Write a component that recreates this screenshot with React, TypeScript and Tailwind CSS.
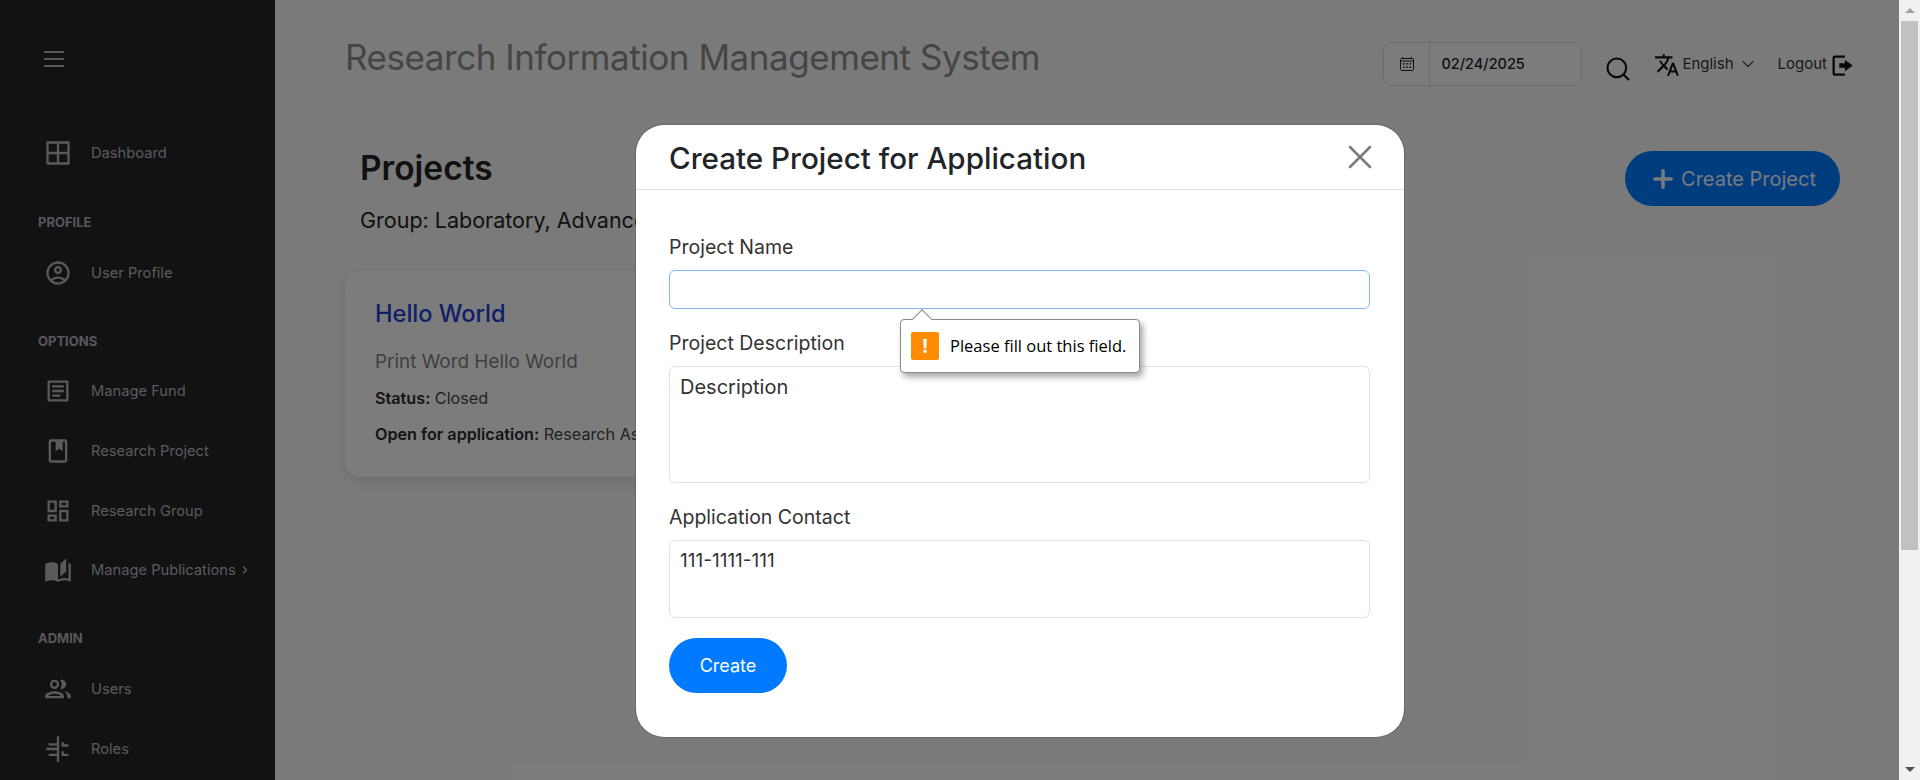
import React from "react";
import { X, Plus, ChevronDown, ChevronRight, Search } from "lucide-react";

const sans = "font-['Inter','Noto_Sans',sans-serif]";

function Ico({ d, cls = "" }: { d: string; cls?: string }) {
  return (
    <svg viewBox="0 0 24 24" className={"w-7 h-7 fill-current shrink-0 " + cls}>
      <path d={d} fillRule="evenodd" />
    </svg>
  );
}

const icons = {
  dash: "M3 2h18a1 1 0 0 1 1 1v18a1 1 0 0 1-1 1H3a1 1 0 0 1-1-1V3a1 1 0 0 1 1-1zm1 2v7h7V4H4zm9 0v7h7V4h-7zM4 13v7h7v-7H4zm9 0v7h7v-7h-7z",
  user: "M12 2C6.48 2 2 6.48 2 12s4.48 10 10 10 10-4.48 10-10S17.52 2 12 2zM7.35 18.5C8.66 17.56 10.26 17 12 17s3.34.56 4.65 1.5C15.34 19.44 13.74 20 12 20s-3.34-.56-4.65-1.5zm10.79-1.38C16.45 15.8 14.32 15 12 15s-4.45.8-6.14 2.12C4.7 15.73 4 13.95 4 12c0-4.42 3.58-8 8-8s8 3.58 8 8c0 1.95-.7 3.73-1.86 5.12zM12 6c-1.93 0-3.5 1.57-3.5 3.5S10.07 13 12 13s3.5-1.57 3.5-3.5S13.93 6 12 6zm0 5c-.83 0-1.5-.67-1.5-1.5S11.17 8 12 8s1.500.67 1.500 1.500S12.830 11 12 11z",
  fund: "M4 3h16a1 1 0 0 1 1 1v16a1 1 0 0 1-1 1H4a1 1 0 0 1-1-1V4a1 1 0 0 1 1-1zm1 2v14h14V5H5zm2 2h10v2H7V7zm0 4h10v2H7v-2zm0 4h7v2H7v-2z",
  book: "M6 2h12a2 2 0 0 1 2 2v16a2 2 0 0 1-2 2H6a2 2 0 0 1-2-2V4a2 2 0 0 1 2-2zm0 2v16h12V4h-2v8l-3-2-3 2V4H6z",
  group: "M19 5v2h-4V5h4M9 5v6H5V5h4m10 8v6h-4v-6h4M9 17v2H5v-2h4M21 3h-8v6h8V3zM11 3H3v10h8V3zm10 8h-8v10h8V11zm-10 4H3v6h8v-6z",
  pub: "M19 1l-5 5v11l5-4.500V1zM1 6v14.650c0 .250.250.500.500.500.100 0 .150-.050.250-.050C3.100 20.450 5.050 20 6.500 20c1.950 0 4.050.400 5.500 1.500V6c-1.450-1.100-3.550-1.500-5.500-1.500S2.450 4.900 1 6zm22 13.500V6c-.600-.450-1.250-.750-2-1v13.500c-1.100-.350-2.300-.500-3.500-.500-1.700 0-4.150.650-5.500 1.500v2c1.350-.850 3.800-1.500 5.500-1.500 1.650 0 3.350.300 4.750 1.050.100.050.150.050.250.050.250 0 .500-.250.500-.500v-1.100z",
  users: "M9 12a4 4 0 1 0 0-8 4 4 0 0 0 0 8zm0-6a2 2 0 1 1 0 4 2 2 0 0 1 0-4zm6.100 6A4 4 0 0 0 15 4c-.5 0-.9.100-1.300.2a6 6 0 0 1 0 7.600c.4.100.8.200 1.400.200zM9 14c-2.700 0-8 1.300-8 4v2h16v-2c0-2.700-5.300-4-8-4zm0 2c2.400 0 4.800.9 5.600 2H3.400c.8-1.100 3.200-2 5.600-2zm8-2c1.500 1.100 3 2.300 3 4v2h3v-2c0-2.300-3.500-3.600-6-4z",
  roles: "M11 1h2v22h-2v-5H4v-2h7v-3H2v-2h9V9H4V7h7V1zm4 5h2v2h4v2h-6V6zm0 8h2v2h4v2h-6v-4z",
  translate: "M12.87 15.07l-2.54-2.51.03-.03c1.74-1.94 2.98-4.17 3.71-6.53H17V4h-7V2H8v2H1v1.990h11.170C11.500 7.920 10.440 9.750 9 11.350 8.070 10.320 7.300 9.190 6.690 8h-2c.730 1.630 1.730 3.170 2.980 4.560l-5.090 5.020L4 19l5-5 3.110 3.110.760-2.040zM18.500 10h-2L12 22h2l1.120-3h4.750L21 22h2l-4.500-12zm-2.620 7l1.620-4.330L19.120 17h-3.240z",
  logout: "M4 5a2 2 0 0 1 2-2h9v2H6v14h9v2H6a2 2 0 0 1-2-2V5zm11 2l7 5-7 5v-3H10v-4h5V7z",
};

function NavItem({ icon, label, chevron }: { icon: string; label: string; chevron?: boolean }) {
  return (
    <div className="h-[60px] flex items-center pl-[44px] gap-[19px] text-[#b4b4b8]">
      <Ico d={icon} cls="text-[#b4b4b8]" />
      <span className={"text-[14.7px] leading-none whitespace-nowrap " + (chevron ? "-mt-[2px]" : "")}>{label}</span>
      {chevron && <ChevronRight className="w-3 h-3 -ml-[16px] -mt-[2px] text-[#c0c0c4]" strokeWidth={2.5} />}
    </div>
  );
}

function Section({ children }: { children: string }) {
  return <div className="pl-[38px] h-5 flex items-center text-[13px] font-bold text-[#b0b0b4] leading-none">{children}</div>;
}

function CalendarDots() {
  return (
    <svg viewBox="0 0 16 16" className="w-4 h-4 text-[#222]">
      <rect x="1.500" y="2.500" width="13" height="12" rx="1" fill="none" stroke="currentColor" strokeWidth="1" />
      <path d="M4 1v2M12 1v2M1.500 5h13" stroke="currentColor" strokeWidth="1" fill="none" />
      <path d="M4 7h1.500v1.500H4zM7.250 7h1.500v1.500h-1.500zM10.500 7H12v1.500h-1.500zM4 10.500h1.500V12H4zM7.250 10.500h1.500V12h-1.500zM10.500 10.500H12V12h-1.500z" fill="currentColor" />
    </svg>
  );
}

export default function App() {
  return (
    <div className={"relative h-[780px] w-full overflow-hidden flex bg-[#f5f5f5] " + sans}>
      <aside className="w-[275px] shrink-0 bg-[#242428] flex flex-col">
        <div className="pl-[44px] pt-[51px] h-[123px]">
          <div className="w-5 flex flex-col gap-[5px]">
            <div className="h-[2px] bg-[#b0b0b0]" />
            <div className="h-[2px] bg-[#b0b0b0]" />
            <div className="h-[2px] bg-[#b0b0b0]" />
          </div>
        </div>
        <NavItem icon={icons.dash} label="Dashboard" />
        <div className="h-[29px]" />
        <Section>PROFILE</Section>
        <div className="h-[11px]" />
        <NavItem icon={icons.user} label="User Profile" />
        <div className="h-[28px]" />
        <Section>OPTIONS</Section>
        <div className="h-[10px]" />
        <NavItem icon={icons.fund} label="Manage Fund" />
        <NavItem icon={icons.book} label="Research Project" />
        <NavItem icon={icons.group} label="Research Group" />
        <NavItem icon={icons.pub} label="Manage Publications" chevron />
        <div className="h-[27px]" />
        <Section>ADMIN</Section>
        <div className="h-[11px]" />
        <NavItem icon={icons.users} label="Users" />
        <NavItem icon={icons.roles} label="Roles" />
      </aside>

      <main className="flex-1 min-w-0 pl-[70px] pr-[46px]">
        <header className="h-[106px] flex items-start">
          <h1 className="mt-[33px] text-[35px] tracking-[-0.45px] leading-[48px] text-[#8a8a8a] whitespace-nowrap">Research Information Management System</h1>
          <div className="ml-auto flex items-start">
            <div className="mt-[42px] w-[199px] h-[44px] flex border border-[#d8d8d8] bg-[#f8f8f8] rounded-lg">
              <div className="w-[46px] border-r border-[#d8d8d8] flex items-center justify-center">
                <CalendarDots />
              </div>
              <div className="pl-[11px] flex items-center text-[14.5px] font-medium text-[#222]">02/24/2025</div>
            </div>
            <Search className="mt-[55px] ml-[22px] w-[28px] h-[28px] text-[#111]" strokeWidth={1.8} />
            <Ico d={icons.translate} cls="mt-[52px] ml-[22px] !w-[26px] !h-[26px] text-[#111]" />
            <span className="mt-[54px] ml-[2px] text-[15px] leading-5 text-[#333]">English</span>
            <ChevronDown className="mt-[54px] ml-1 w-5 h-5 text-[#444]" strokeWidth={1.3} />
            <span className="mt-[54px] ml-[20px] text-[15px] leading-5 text-[#333]">Logout</span>
            <Ico d={icons.logout} cls="mt-[51px] ml-[1px] !w-[27px] !h-[29px] -mr-[2px] text-[#111]" />
          </div>
        </header>

        <section className="flex items-start pl-[15px] pr-[13px]">
          <div>
            <h2 className="mt-[42px] text-[33.5px] leading-10 font-semibold text-[#222]">Projects</h2>
            <p className="mt-[17px] text-[21.5px] leading-[30px] text-[#222] whitespace-nowrap">Group: Laboratory, Advanced Research Laboratory</p>
          </div>
          <button className="ml-auto mt-[45px] w-[215px] h-[55px] rounded-full bg-[#007bff] text-[#f0f4ff] text-[20px] flex items-center justify-center gap-[4px]">
            <Plus className="w-[28px] h-[28px]" strokeWidth={3} />
            Create Project
          </button>
        </section>

        <article className="mt-[36px] w-[700px] h-[206px] rounded-2xl bg-[#f8f8f8] shadow-[0_4px_14px_rgba(0,0,0,0.12)] pl-[30px] pt-[25px]">
          <h3 className="text-[23.6px] leading-[36px] font-medium text-[#1f3fd0]">Hello World</h3>
          <p className="mt-[18px] text-[18.9px] leading-6 text-[#808080]">Print Word Hello World</p>
          <p className="mt-[12px] text-[16.2px] leading-6 text-[#444]"><b className="font-semibold text-[#2a2a2a]">Status:</b> Closed</p>
          <p className="mt-[12px] text-[16.2px] leading-6 text-[#444] whitespace-nowrap"><b className="font-semibold text-[#2a2a2a]">Open for application:</b> Research Assistant</p>
        </article>
      </main>

      <div className="w-[21px] shrink-0 bg-[#f1f1f1] flex flex-col items-center">
        <div className="h-[21px] w-full flex items-center justify-center">
          <div className="w-0 h-0 border-x-[5px] border-x-transparent border-b-[5px] border-b-[#a3a3a3]" />
        </div>
        <div className="w-[17px] h-[529px] bg-[#c1c1c1]" />
        <div className="mt-auto h-[21px] w-full flex items-center justify-center">
          <div className="w-0 h-0 border-x-[5px] border-x-transparent border-t-[5px] border-t-[#505050]" />
        </div>
      </div>

      <div className="absolute left-0 top-0 bottom-0 right-[21px] bg-black/50" />

      <div className="absolute left-[636px] top-[125px] w-[768px] h-[612px] bg-white rounded-[28px] shadow-[0_0_2px_rgba(0,0,0,0.4)] text-[#222]">
        <div className="h-[65px] border-b border-[#dee2e6] flex items-center justify-between pl-[33px] pr-[24px]">
          <h2 className="mt-[2px] text-[29.6px] leading-10 font-medium text-[#212529] whitespace-nowrap">Create Project for Application</h2>
          <X className="w-[40px] h-[40px] text-[#7a7a7a]" strokeWidth={1.5} />
        </div>
        <form className="pl-[33px] pr-[34px] pt-[43px]">
          <label className="block text-[19.5px] leading-[28px] text-[#333]">Project Name</label>
          <div className="mt-[9px] h-[39px] rounded-md border border-[#86b7fe]" />
          <label className="block mt-[20px] text-[19.5px] leading-[28px] text-[#333]">Project Description</label>
          <div className="mt-[9px] h-[117px] rounded-md border border-[#dee2e6] px-[10px] pt-[8px] text-[20px] leading-6 text-[#333]">Description</div>
          <label className="block mt-[20px] text-[19.5px] leading-[28px] text-[#333]">Application Contact</label>
          <div className="mt-[9px] h-[78px] rounded-md border border-[#dee2e6] px-[10px] pt-[8px] text-[19px] leading-6 text-[#333]">111-1111-111</div>
          <button type="button" className="mt-[20px] w-[118px] h-[55px] rounded-full bg-[#007bff] text-white text-[18px]">Create</button>
        </form>
      </div>

      <div className="absolute left-[900px] top-[319px] w-[240px] h-[54px] bg-white border border-[#8a8a8a] rounded-[4px] shadow-[3px_4px_6px_rgba(0,0,0,0.35)] flex items-center pl-[10px] gap-[11px] font-['Open_Sans',sans-serif]">
        <div className="w-[28px] h-[28px] rounded-[2px] bg-[#ff8c00] flex items-center justify-center text-white text-[20px] font-bold leading-none">!</div>
        <span className="text-[16.5px] text-black whitespace-nowrap">Please fill out this field.</span>
        <div className="absolute left-[14px] -top-[8px] w-[14px] h-[14px] rotate-45 bg-white border-l border-t border-[#8a8a8a]" />
      </div>
    </div>
  );
}
